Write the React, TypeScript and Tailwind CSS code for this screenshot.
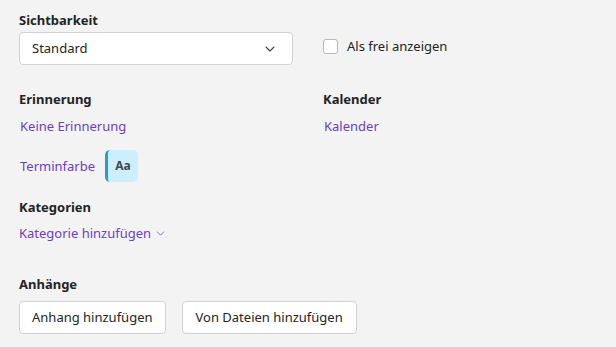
import { ChevronDown } from 'lucide-react'

const Label: React.FC<{ children: React.ReactNode }> = ({ children }) => (
  <p className="text-[13px] font-bold leading-[18px] text-[#242424]">{children}</p>
)

const LinkText: React.FC<{ children: React.ReactNode }> = ({ children }) => (
  <button className="text-left text-[13px] leading-[18px] text-[#6b3fc4]">{children}</button>
)

export default function App() {
  return (
    <div
      className="min-h-[347px] w-[616px] bg-[#f3f3f3] px-[19px] pt-[11px] text-[#242424]"
      style={{ fontFamily: '"Segoe UI", "Noto Sans", "Open Sans", sans-serif' }}
    >
      <div className="flex items-end gap-[30px]">
        <div className="w-[274px]">
          <Label>Sichtbarkeit</Label>
          <button className="mt-[3px] flex h-[33px] w-full items-center justify-between rounded-[4px] border border-[#d1d1d1] bg-white pl-[12px] pr-[14px] text-[13px]">
            <span>Standard</span>
            <ChevronDown size={16} strokeWidth={1.6} className="text-[#424242]" />
          </button>
        </div>
        <label className="mb-[9px] flex items-center gap-[9px] text-[13px] text-[#242424]">
          <span className="size-[15px] rounded-[3px] border border-[#b8b8b8] bg-white" />
          Als frei anzeigen
        </label>
      </div>

      <div className="mt-[25px] flex">
        <div className="w-[304px]">
          <Label>Erinnerung</Label>
          <div className="mt-[5px] pl-px">
            <LinkText>Keine Erinnerung</LinkText>
          </div>
        </div>
        <div>
          <Label>Kalender</Label>
          <div className="mt-[5px] pl-px">
            <LinkText>Kalender</LinkText>
          </div>
        </div>
      </div>

      <div className="mt-[13px] flex items-center gap-[10px] pl-px">
        <LinkText>Terminfarbe</LinkText>
        <div className="grid h-[32px] w-[33px] place-items-center rounded-[5px] border-l-[3px] border-[#1f9ed9] bg-[#cdeefd] text-[12px] font-bold text-[#3f4a55]">
          Aa
        </div>
      </div>

      <div className="mt-[16px]">
        <Label>Kategorien</Label>
        <div className="mt-[8px] flex items-center gap-[3px]">
          <LinkText>Kategorie hinzufügen</LinkText>
          <ChevronDown size={13} strokeWidth={1.4} className="mt-px text-[#6b3fc4]" />
        </div>
      </div>

      <div className="mt-[33px]">
        <Label>Anhänge</Label>
        <div className="mt-[8px] flex gap-[16px]">
          <button className="h-[33px] rounded-[4px] border border-[#d1d1d1] bg-white px-[12px] text-[13px]">
            Anhang hinzufügen
          </button>
          <button className="h-[33px] rounded-[4px] border border-[#d1d1d1] bg-white px-[13px] text-[13px]">
            Von Dateien hinzufügen
          </button>
        </div>
      </div>
    </div>
  )
}
